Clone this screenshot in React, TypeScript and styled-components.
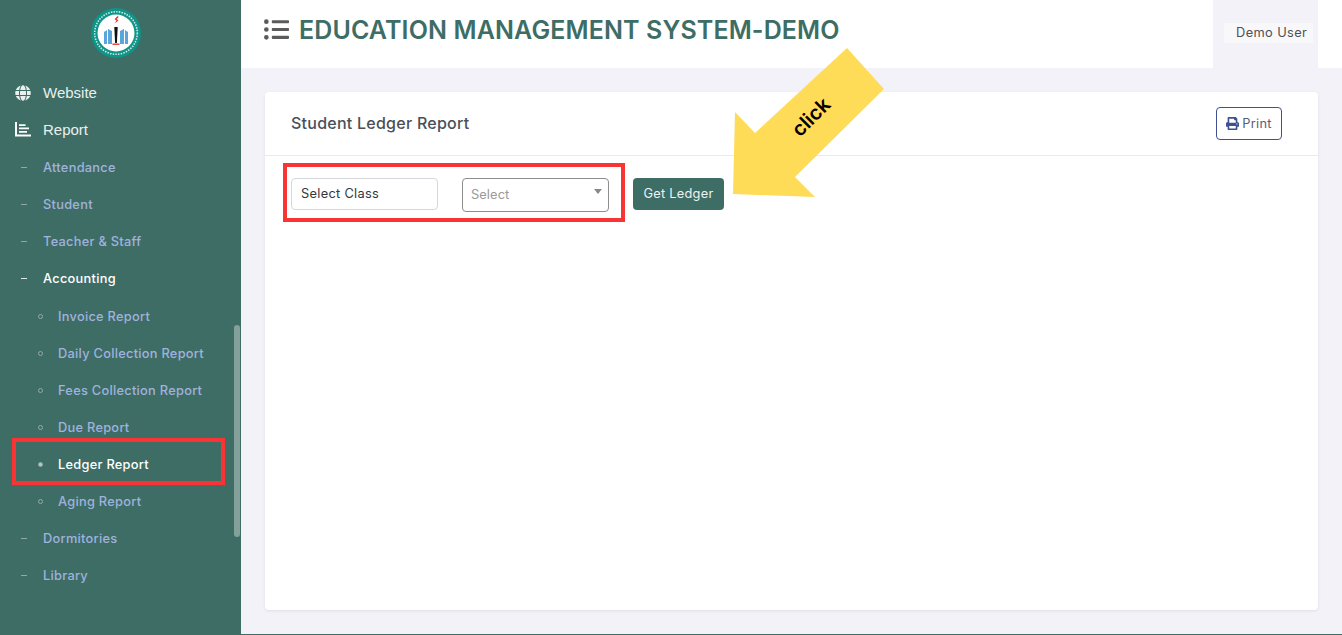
import styled, { createGlobalStyle } from "styled-components";
import { FaGlobe, FaListUl, FaPrint } from "react-icons/fa";

const GREEN = "#3e6d65";
const LINK = "#a0b2de";
const BODY_FONT = `Inter, "Open Sans", "Liberation Sans", sans-serif`;

const GlobalStyle = createGlobalStyle`
  html, body {
    margin: 0;
    height: 635px;
    overflow: hidden;
    background: #f2f2f8;
    font-family: ${BODY_FONT};
  }
  *, *::before, *::after {
    box-sizing: border-box;
  }
`;

const Page = styled.div`
  position: relative;
  display: grid;
  grid-template-columns: 241px 1fr;
  width: 1342px;
  height: 635px;
`;

const Sidebar = styled.aside`
  position: relative;
  background: ${GREEN};
  padding-top: 8px;
`;

const LogoWrap = styled.div`
  display: flex;
  justify-content: center;
  height: 66px;
  margin-left: -9px;
`;

const TopLink = styled.div`
  display: flex;
  align-items: center;
  height: 37px;
  padding-left: 15px;
  gap: 12px;
  color: #e9f0ee;
  font-family: "Liberation Sans", Arial, sans-serif;
  font-size: 15px;

  & + & {
    height: 38px;
    padding-bottom: 2px;
  }

  svg {
    width: 16px;
    height: 16px;
    flex: none;
  }
`;

const SubLink = styled.div<{ $active?: boolean }>`
  display: flex;
  align-items: center;
  height: 37.1px;
  margin-bottom: ${(p) => (p.$active ? "0.5px" : "0")};
  padding-left: 21px;
  color: ${(p) => (p.$active ? "#ffffff" : LINK)};
  font-size: 12.8px;
  font-weight: 500;
  letter-spacing: 0.28px;

  &::before {
    content: "";
    width: 6px;
    height: 1px;
    margin-right: 16px;
    background: ${(p) => (p.$active ? "#dfe8e5" : "#8fa8a6")};
  }
`;

const NestedLink = styled.div<{ $active?: boolean }>`
  display: flex;
  align-items: center;
  height: 37px;
  padding-left: 38px;
  color: ${(p) => (p.$active ? "#ffffff" : LINK)};
  font-size: 12.8px;
  font-weight: 500;
  letter-spacing: 0.28px;

  &::before {
    content: "";
    width: 5px;
    height: 5px;
    margin-right: 15px;
    border-radius: 50%;
    border: 1px solid #93aaa8;
    background: ${(p) => (p.$active ? "#b6c6c3" : "transparent")};
  }
`;

const Scrollbar = styled.div`
  position: absolute;
  left: 234px;
  top: 325px;
  width: 6px;
  height: 212px;
  border-radius: 3px;
  background: #84a09b;
`;

const Content = styled.div`
  display: flex;
  flex-direction: column;
  border-bottom: 1px solid ${GREEN};
`;

const Header = styled.header`
  display: flex;
  align-items: stretch;
  justify-content: space-between;
  flex: none;
  height: 68px;
  padding: 0 24px 0 23px;
  background: #ffffff;
`;

const TitleRow = styled.div`
  display: flex;
  align-items: center;
  gap: 10px;
  height: 60px;

  svg {
    width: 25px;
    height: 25px;
    color: #5b5b5b;
    margin-top: -2px;
  }
`;

const Title = styled.h1`
  margin: 0;
  color: ${GREEN};
  font-size: 25px;
  font-weight: 600;
  letter-spacing: 0.12px;
  white-space: nowrap;
`;

const UserBlock = styled.div`
  display: flex;
  align-items: flex-start;
  width: 105px;
  padding: 23px 5px 0 11px;
  background: #f2f2f8;
`;

const UserChip = styled.div`
  width: 100%;
  height: 20px;
  padding-left: 12px;
  background: #f8f8fb;
  color: #4c5058;
  font-size: 12.8px;
  letter-spacing: 0.4px;
  line-height: 20px;
  white-space: nowrap;
`;

const Main = styled.main`
  flex: 1;
  padding: 24px;
`;

const Card = styled.section`
  height: 518px;
  background: #ffffff;
  border-radius: 4px;
  box-shadow: 0 1px 3px rgba(60, 60, 90, 0.1);
`;

const CardHeader = styled.div`
  display: flex;
  align-items: center;
  justify-content: space-between;
  height: 64px;
  padding: 0 36px 0 26px;
  border-bottom: 1px solid #e9e9ee;
`;

const CardTitle = styled.h2`
  margin: -1px 0 0;
  color: #4b4f58;
  font-size: 16px;
  font-weight: 500;
  letter-spacing: 0.25px;
`;

const PrintButton = styled.button`
  display: flex;
  align-items: center;
  justify-content: center;
  gap: 3px;
  width: 66px;
  height: 33px;
  padding: 0;
  background: #ffffff;
  border: 1px solid #3f5190;
  border-radius: 4px;
  color: #555d78;
  font-family: inherit;
  font-size: 12.8px;
  letter-spacing: 0.25px;

  svg {
    width: 13px;
    height: 13px;
    color: #3f5190;
  }
`;

const FilterRow = styled.div`
  display: flex;
  align-items: flex-start;
  padding: 22px 0 0 26px;
`;

const ClassBox = styled.div`
  width: 147px;
  height: 32px;
  margin-right: 24px;
  padding-left: 9px;
  border: 1px solid #d4d7dc;
  border-radius: 4px;
  color: #33363c;
  font-size: 12.8px;
  letter-spacing: 0.3px;
  line-height: 29px;
`;

const SelectBox = styled.div`
  position: relative;
  width: 147px;
  height: 34px;
  margin-right: 24px;
  padding-left: 8px;
  border: 1px solid #8d8d8d;
  border-radius: 4px;
  color: #9a9a9a;
  font-size: 12.8px;
  letter-spacing: 0.1px;
  line-height: 31px;

  &::after {
    content: "";
    position: absolute;
    top: 10px;
    right: 6px;
    border-left: 4px solid transparent;
    border-right: 4px solid transparent;
    border-top: 5px solid #888888;
  }
`;

const LedgerButton = styled.button`
  width: 91px;
  height: 32px;
  padding: 0 0 1px;
  background: ${GREEN};
  border: none;
  border-radius: 4px;
  color: #eef3f1;
  font-family: inherit;
  font-size: 12.8px;
  letter-spacing: 0.25px;
`;

const RedMark = styled.div<{ $x: number; $y: number; $w: number; $h: number }>`
  position: absolute;
  left: ${(p) => p.$x}px;
  top: ${(p) => p.$y}px;
  width: ${(p) => p.$w}px;
  height: ${(p) => p.$h}px;
  border: 4px solid #f93434;
  pointer-events: none;
`;

const Arrow = styled.svg`
  position: absolute;
  left: 725px;
  top: 40px;
  width: 170px;
  height: 165px;
`;

const ArrowLabel = styled.text`
  font-family: ${BODY_FONT};
  font-size: 20px;
  font-weight: 600;
  fill: #000000;
`;

function Logo() {
  return (
    <svg width="50" height="50" viewBox="0 0 50 50">
      <circle cx="25" cy="25" r="25" fill="#0f9488" />
      <circle cx="25" cy="25" r="18.5" fill="#ffffff" />
      <circle cx="25" cy="25" r="21.3" fill="none" stroke="#cfe9e5" strokeWidth="1.6" strokeDasharray="1.5 1.2" />
      <path d="M13 36V24l3-2v14zM17 36V21l4 2v13zM29 36V23l4-2v15zM34 36V22l3 2v12z" fill="#5aa6dc" />
      <path d="M23.3 19h3.4l-.8 16h-1.8z" fill="#111111" />
      <path d="M21.5 35.5h7v1.4h-7z" fill="#e8352e" />
      <path d="M26.5 8l-3 3.2 2 1.3-2 3 4-3-1.8-1.5 2-2z" fill="#e8352e" />
    </svg>
  );
}

function ReportIcon() {
  return (
    <svg viewBox="0 0 16 16" fill="#ffffff">
      <path d="M0 1h2v12.6h14v1.9H0z" />
      <path d="M4 3.2h6.5v1.7H4zM4 6.6h10v1.7H4zM4 10h8v1.7H4z" />
    </svg>
  );
}

export default function App() {
  return (
    <Page>
      <GlobalStyle />
      <Sidebar>
        <LogoWrap>
          <Logo />
        </LogoWrap>
        <TopLink>
          <FaGlobe />
          Website
        </TopLink>
        <TopLink>
          <ReportIcon />
          Report
        </TopLink>
        <SubLink>Attendance</SubLink>
        <SubLink>Student</SubLink>
        <SubLink>Teacher &amp; Staff</SubLink>
        <SubLink $active>Accounting</SubLink>
        <NestedLink>Invoice Report</NestedLink>
        <NestedLink>Daily Collection Report</NestedLink>
        <NestedLink>Fees Collection Report</NestedLink>
        <NestedLink>Due Report</NestedLink>
        <NestedLink $active>Ledger Report</NestedLink>
        <NestedLink>Aging Report</NestedLink>
        <SubLink>Dormitories</SubLink>
        <SubLink>Library</SubLink>
        <Scrollbar />
      </Sidebar>
      <Content>
        <Header>
          <TitleRow>
            <FaListUl />
            <Title>EDUCATION MANAGEMENT SYSTEM-DEMO</Title>
          </TitleRow>
          <UserBlock>
            <UserChip>Demo User</UserChip>
          </UserBlock>
        </Header>
        <Main>
          <Card>
            <CardHeader>
              <CardTitle>Student Ledger Report</CardTitle>
              <PrintButton>
                <FaPrint />
                Print
              </PrintButton>
            </CardHeader>
            <FilterRow>
              <ClassBox>Select Class</ClassBox>
              <SelectBox>Select</SelectBox>
              <LedgerButton>Get Ledger</LedgerButton>
            </FilterRow>
          </Card>
        </Main>
      </Content>
      <RedMark $x={12} $y={438} $w={213} $h={47} />
      <RedMark $x={283} $y={163} $w={342} $h={59} />
      <Arrow viewBox="725 40 170 165">
        <polygon
          points="847,48 884,89 795,177 815,197 733,194 735,112 755,133"
          fill="#ffdc58"
        />
        <ArrowLabel x="812" y="118" textAnchor="middle" dominantBaseline="middle" transform="rotate(-45 812 118)">
          click
        </ArrowLabel>
      </Arrow>
    </Page>
  );
}
